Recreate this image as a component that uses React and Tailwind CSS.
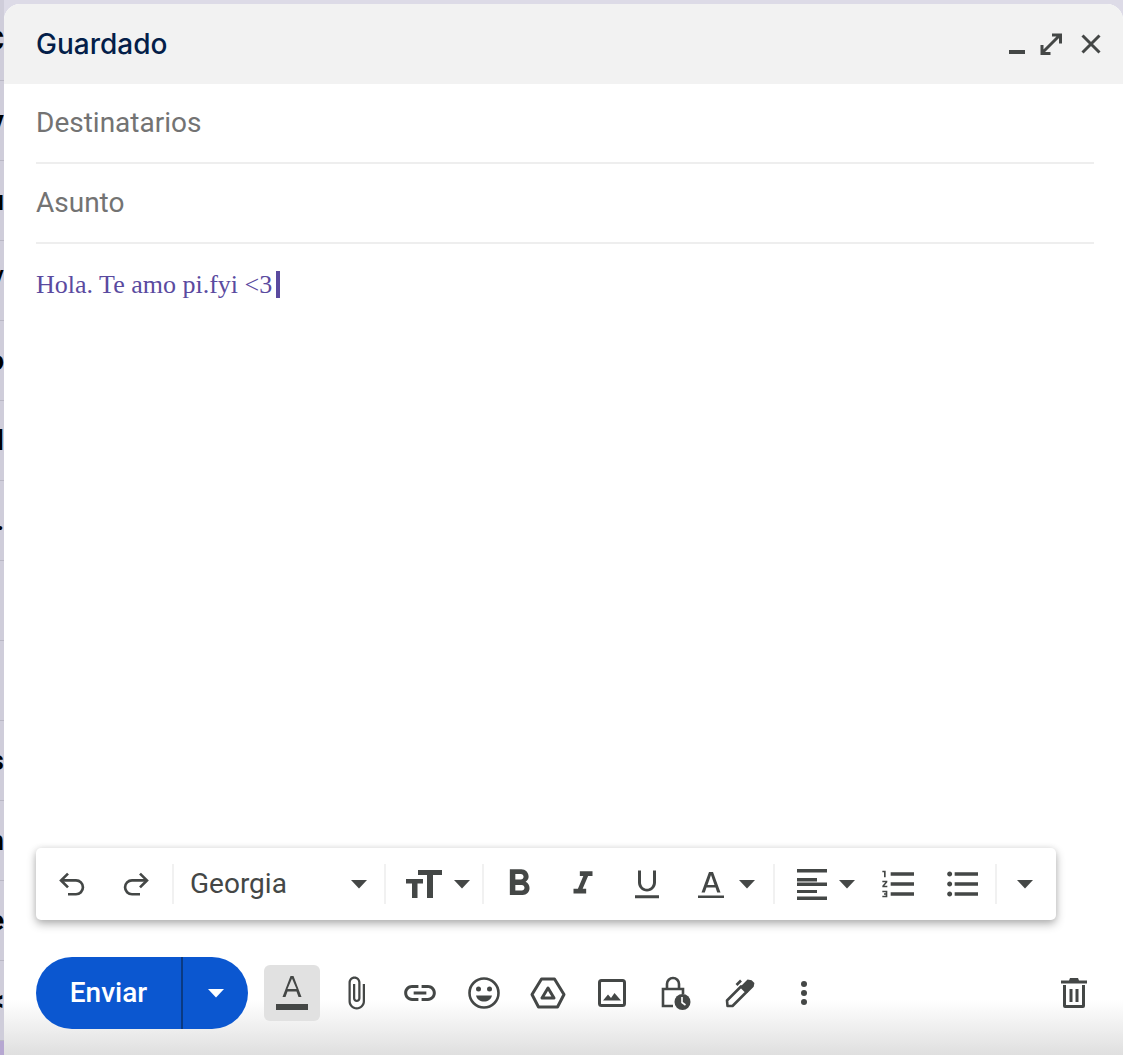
const sliver = ["C", "v", "u", "/", "o", "l", ".", "", "", "s", "n", "e", "<"];

function Icon({ children, className = "w-12 h-12", viewBox = "0 0 24 24" }) {
  return (
    <svg className={className} viewBox={viewBox} fill="#444746">
      {children}
    </svg>
  );
}

function Caret({ className = "" }) {
  return (
    <svg className={`w-[18px] h-[10px] ${className}`} viewBox="0 0 18 10" fill="#444746">
      <path d="M1 1h16l-8 8.5z" />
    </svg>
  );
}

function Sep() {
  return <div className="w-[2px] h-10 bg-[#f1f1f1] shrink-0" />;
}

function Btn({ children, className = "w-16" }) {
  return <div className={`flex items-center justify-center shrink-0 h-full ${className}`}>{children}</div>;
}

function Toolbar() {
  return (
    <div className="ml-8 w-[1020px] h-[72px] mb-[37px] shrink-0 bg-white rounded-[5px] shadow-[0_4px_10px_rgba(0,0,0,0.3),0_0_6px_rgba(0,0,0,0.08)] flex items-center pl-1">
      <Btn>
        <svg className="w-[32px] h-[32px]" viewBox="0 0 24 24" fill="none" stroke="#444746" strokeWidth="2">
          <path d="M9 14.5 3.8 9.3 9 4.2" />
          <path d="M4 9.3h11a5.2 5.2 0 0 1 0 10.4H9" />
        </svg>
      </Btn>
      <Btn>
        <svg className="w-[32px] h-[32px]" viewBox="0 0 24 24" fill="none" stroke="#444746" strokeWidth="2">
          <path d="m15 14.5 5.2-5.2L15 4.2" />
          <path d="M20 9.3H9a5.2 5.2 0 0 0 0 10.4h6" />
        </svg>
      </Btn>
      <div className="w-1 shrink-0" />
      <Sep />
      <div className="w-[210px] shrink-0 flex items-center pl-4 pr-[16px] justify-between text-[28px] text-[#444746] font-['Roboto',sans-serif]">
        <span>Georgia</span>
        <Caret />
      </div>
      <Sep />
      <Btn className="w-[96px]">
        <div className="flex items-center gap-[11px] ml-[8px]">
          <svg className="w-[36px] h-[30px]" viewBox="0 0 36 30" fill="#444746">
            <path d="M12 1h24v5H27v23h-6V6h-9z" />
            <path d="M0 10h17v4.5h-5.5V29H6V14.5H0z" />
          </svg>
          <Caret />
        </div>
      </Btn>
      <Sep />
      <div className="w-[3px] shrink-0" />
      <Btn>
        <Icon className="w-[44px] h-[44px]">
          <path d="M15.6 10.79c.97-.67 1.65-1.77 1.65-2.79 0-2.26-1.75-4-4-4H7v14h7.04c2.09 0 3.71-1.7 3.71-3.79 0-1.52-.86-2.82-2.15-3.42zM10 6.5h3c.83 0 1.5.67 1.5 1.5s-.67 1.5-1.5 1.5h-3v-3zm3.5 9H10v-3h3.5c.83 0 1.5.67 1.5 1.5s-.67 1.5-1.5 1.5z" />
        </Icon>
      </Btn>
      <Btn>
        <Icon className="w-[38px] h-[38px]">
          <path d="M10 4v3h2.21l-3.42 8H6v3h8v-3h-2.21l3.42-8H18V4z" />
        </Icon>
      </Btn>
      <Btn>
        <Icon className="w-[36px] h-[36px]">
          <path d="M12 17c3.31 0 6-2.69 6-6V3h-2v8c0 2.2-1.8 4.2-4 4.2S8 13.2 8 11V3H6v8c0 3.31 2.69 6 6 6zm-8 2.5V21.5h16v-2z" />
        </Icon>
      </Btn>
      <Btn className="w-[94px]">
        <div className="flex items-center gap-[14px] ml-[1px]">
          <svg className="w-[26px] h-[30px]" viewBox="0 0 26 30" fill="#444746">
            <path d="M0 26.5h26V29H0zM3.5 23.5 11 3h4l7.500 20.500h-3.300l-1.700-5H8.500l-1.700 5zM9.500 16h7L13 6z" />
          </svg>
          <Caret />
        </div>
      </Btn>
      <Sep />
      <div className="w-[4px] shrink-0" />
      <Btn className="w-[88px]">
        <div className="flex items-center gap-[11px] ml-[7px]">
          <svg className="w-[30px] h-[31px]" viewBox="0 0 30 31" fill="#444746">
            <path d="M0 0h30v3.500H0zM0 9h20v3.500H0zM0 13.500h30V17H0zM0 21h20v3H0zM0 27.500h30V31H0z" />
          </svg>
          <Caret />
        </div>
      </Btn>
      <Btn>
        <Icon className="w-[40px] h-[40px]">
          <path d="M2 17h2v.5H3v1h1v.5H2v1h3v-4H2v1zm1-9h1V4H2v1h1v3zm-1 3h1.800L2 13.100v.9h3v-1H3.200L5 10.900V10H2v1zm5-6v2h14V5H7zm0 14h14v-2H7v2zm0-6h14v-2H7v2z" />
        </Icon>
      </Btn>
      <Btn>
        <Icon className="w-[40px] h-[40px]">
          <path d="M4 10.500c-.83 0-1.500.67-1.500 1.500s.67 1.500 1.500 1.500 1.500-.67 1.500-1.500-.67-1.500-1.500-1.500zm0-6c-.83 0-1.500.67-1.500 1.500S3.170 7.500 4 7.500 5.500 6.830 5.500 6 4.830 4.500 4 4.500zm0 12c-.83 0-1.500.68-1.500 1.500s.68 1.500 1.500 1.500 1.500-.68 1.500-1.500-.67-1.500-1.500-1.500zM7 19h14v-2H7v2zm0-6h14v-2H7v2zm0-8v2h14V5H7z" />
        </Icon>
      </Btn>
      <Sep />
      <Btn className="w-[56px]">
        <Caret />
      </Btn>
    </div>
  );
}

function Footer() {
  return (
    <div className="h-[98px] shrink-0 pl-8 pr-[17px] flex items-start bg-gradient-to-b from-white via-white via-[44%] to-[#dfdfdf]">
      <div className="w-[212px] h-[72px] shrink-0 rounded-full bg-[#0b57d0] flex items-center text-white font-['Roboto',sans-serif] text-[28px]">
        <span className="w-[147px] h-full flex items-center justify-center font-medium border-r-2 border-[#0a3a83]">Enviar</span>
        <div className="flex-1 flex justify-center">
          <svg className="w-[18px] h-[10px]" viewBox="0 0 18 10" fill="#fff">
            <path d="M1 1h16l-8 8.500z" />
          </svg>
        </div>
      </div>
      <div className="ml-3 h-[72px] flex items-center">
        <Btn>
          <div className="w-14 h-14 rounded-[6px] bg-[#e1e1e1] flex items-center justify-center">
            <svg className="w-[32px] h-[34px]" viewBox="0 0 32 34" fill="#444746">
              <path d="M0 28h32v6H0zM6.500 21 14.500 0h3l8 21h-3l-2-5.500h-9L9.500 21zm5-8h9L16 2.500z" />
            </svg>
          </div>
        </Btn>
        <Btn>
          <Icon className="w-[36px] h-[36px]">
            <path d="M16.500 6v11.500c0 2.210-1.790 4-4 4s-4-1.790-4-4V5c0-1.380 1.120-2.500 2.500-2.500s2.500 1.120 2.500 2.500v10.500c0 .55-.45 1-1 1s-1-.45-1-1V6H10v9.500c0 1.380 1.120 2.500 2.500 2.500s2.500-1.120 2.500-2.500V5c0-2.210-1.790-4-4-4S7 2.790 7 5v12.500c0 3.040 2.460 5.500 5.500 5.500s5.500-2.460 5.500-5.500V6h-1.500z" />
          </Icon>
        </Btn>
        <Btn>
          <Icon className="w-[38px] h-[38px]">
            <path d="M3.900 12c0-1.710 1.390-3.100 3.100-3.100h4V7H7c-2.760 0-5 2.240-5 5s2.240 5 5 5h4v-1.900H7c-1.710 0-3.100-1.390-3.100-3.100zM8 13h8v-2H8v2zm9-6h-4v1.900h4c1.710 0 3.100 1.390 3.100 3.100s-1.390 3.100-3.100 3.100h-4V17h4c2.760 0 5-2.240 5-5s-2.240-5-5-5z" />
          </Icon>
        </Btn>
        <Btn>
          <svg className="w-[32px] h-[32px]" viewBox="0 0 32 32">
            <circle cx="16" cy="16" r="14.500" fill="none" stroke="#444746" strokeWidth="2.600" />
            <circle cx="10.500" cy="12" r="2.500" fill="#444746" />
            <circle cx="21.500" cy="12" r="2.500" fill="#444746" />
            <path d="M8 18.500h16c-1 4-4.200 6-8 6s-7-2-8-6z" fill="#444746" />
          </svg>
        </Btn>
        <Btn>
          <svg className="w-[36px] h-[32px]" viewBox="0 0 36 32" fill="none" stroke="#444746" strokeWidth="3" strokeLinejoin="round">
            <path d="M11.500 2h13L34 17.500 27.500 30h-19L2 17.500z" />
            <path d="M18 11 24 21H12z" />
          </svg>
        </Btn>
        <Btn>
          <svg className="w-[28px] h-[28px]" viewBox="0 0 28 28">
            <rect x="1.500" y="1.500" width="25" height="25" rx="2" fill="none" stroke="#444746" strokeWidth="3" />
            <path d="m5 21.500 5-6 3 3.500 3.500-5 6.500 7.500z" fill="#444746" />
          </svg>
        </Btn>
        <Btn>
          <svg className="w-[30px] h-[34px]" viewBox="0 0 30 34" fill="none">
            <path d="M12 30H2V13h20v5" stroke="#444746" strokeWidth="2.600" />
            <path d="M6 13V8a6 6 0 0 1 12 0v5" stroke="#444746" strokeWidth="2.600" />
            <circle cx="21.500" cy="26" r="8" fill="#444746" />
            <path d="M21 21v5.500l3.500 2.500" stroke="#fff" strokeWidth="1.600" />
          </svg>
        </Btn>
        <Btn>
          <svg className="w-[30px] h-[30px]" viewBox="0 0 30 30" fill="none" stroke="#444746" strokeWidth="2.600">
            <path d="M2.500 28 2 22.500 16 8.500l5.500 5.500L7.500 28z" strokeLinejoin="round" />
            <path d="M11.500 7 16 2.500" />
            <path d="m18 8 5-5 3 .5 2 2-.5 2.500-5 5z" fill="#444746" />
          </svg>
        </Btn>
        <Btn>
          <svg className="w-[10px] h-[28px]" viewBox="0 0 10 28" fill="#444746">
            <circle cx="5" cy="5" r="3" />
            <circle cx="5" cy="14" r="3" />
            <circle cx="5" cy="23" r="3" />
          </svg>
        </Btn>
      </div>
      <div className="ml-auto h-[72px]">
        <Btn>
          <svg className="w-[26px] h-[30px]" viewBox="0 0 26 30" fill="#444746">
            <path d="M9 0h8l1 2.500h8V5.500H0V2.500h8zM2 7h22v21a2 2 0 0 1-2 2H4a2 2 0 0 1-2-2zm3 0v20h16V7zm3.500 4h3v13h-3zm6 0h3v13h-3z" fillRule="evenodd" />
          </svg>
        </Btn>
      </div>
    </div>
  );
}

export default function App() {
  return (
    <div className="w-[1123px] h-[1055px] overflow-hidden bg-[#dddbe7] flex pt-1 font-['Roboto',sans-serif]">
      {/* inbox behind the compose window */}
      <div className="w-1 shrink-0 bg-[#cfcdda] flex flex-col overflow-hidden -mt-1 pt-[1px]">
        {sliver.map((letter, i) => (
          <div key={i} className="h-20 shrink-0 border-b border-[#b9b7c4] flex items-center justify-end overflow-hidden text-[28px] font-bold text-black leading-none">
            <span className="shrink-0">{letter}</span>
          </div>
        ))}
        <div className="flex-1 bg-[#b6a7d1]" />
      </div>

      <div className="flex-1 min-w-0 flex flex-col bg-white rounded-t-2xl overflow-hidden">
        <div className="h-20 shrink-0 bg-[#f2f2f2] flex items-center pl-8 pr-[22px]">
          <span className="text-[28px] font-medium text-[#041e49] font-['Inter',sans-serif]">Guardado</span>
          <div className="ml-auto flex items-center">
            <svg className="w-4 h-1 mt-4" viewBox="0 0 16 4" fill="#444746">
              <rect width="16" height="4" />
            </svg>
            <svg className="w-[22px] h-[22px] ml-[15px]" viewBox="0 0 22 22" fill="none" stroke="#444746" strokeWidth="3">
              <path d="M2 12v8.500h8.500M12 2h8.500v8.500M20 2 2.500 19.500" />
            </svg>
            <svg className="w-5 h-5 ml-[19px]" viewBox="0 0 20 20" fill="none" stroke="#444746" strokeWidth="3">
              <path d="m1.500 1.500 17 17M18.500 1.500l-17 17" />
            </svg>
          </div>
        </div>

        <div className="mx-8 w-[1058px] h-20 shrink-0 border-b-2 border-[#eeeeee] flex items-center text-[28px] text-[#737373]">Destinatarios</div>
        <div className="mx-8 w-[1058px] h-20 shrink-0 border-b-2 border-[#eeeeee] flex items-center text-[28px] text-[#737373]">Asunto</div>

        <div className="flex-1 min-h-0 pl-8 pt-[26px]">
          <div className="flex items-center h-7 text-[26px] text-[#5a4a9f] font-['Liberation_Serif',serif]">
            <span>Hola. Te amo pi.fyi &lt;3</span>
            <span className="w-1 h-[27px] ml-1 bg-[#5a4a9f]" />
          </div>
        </div>

        <Toolbar />
        <Footer />
      </div>
    </div>
  );
}
